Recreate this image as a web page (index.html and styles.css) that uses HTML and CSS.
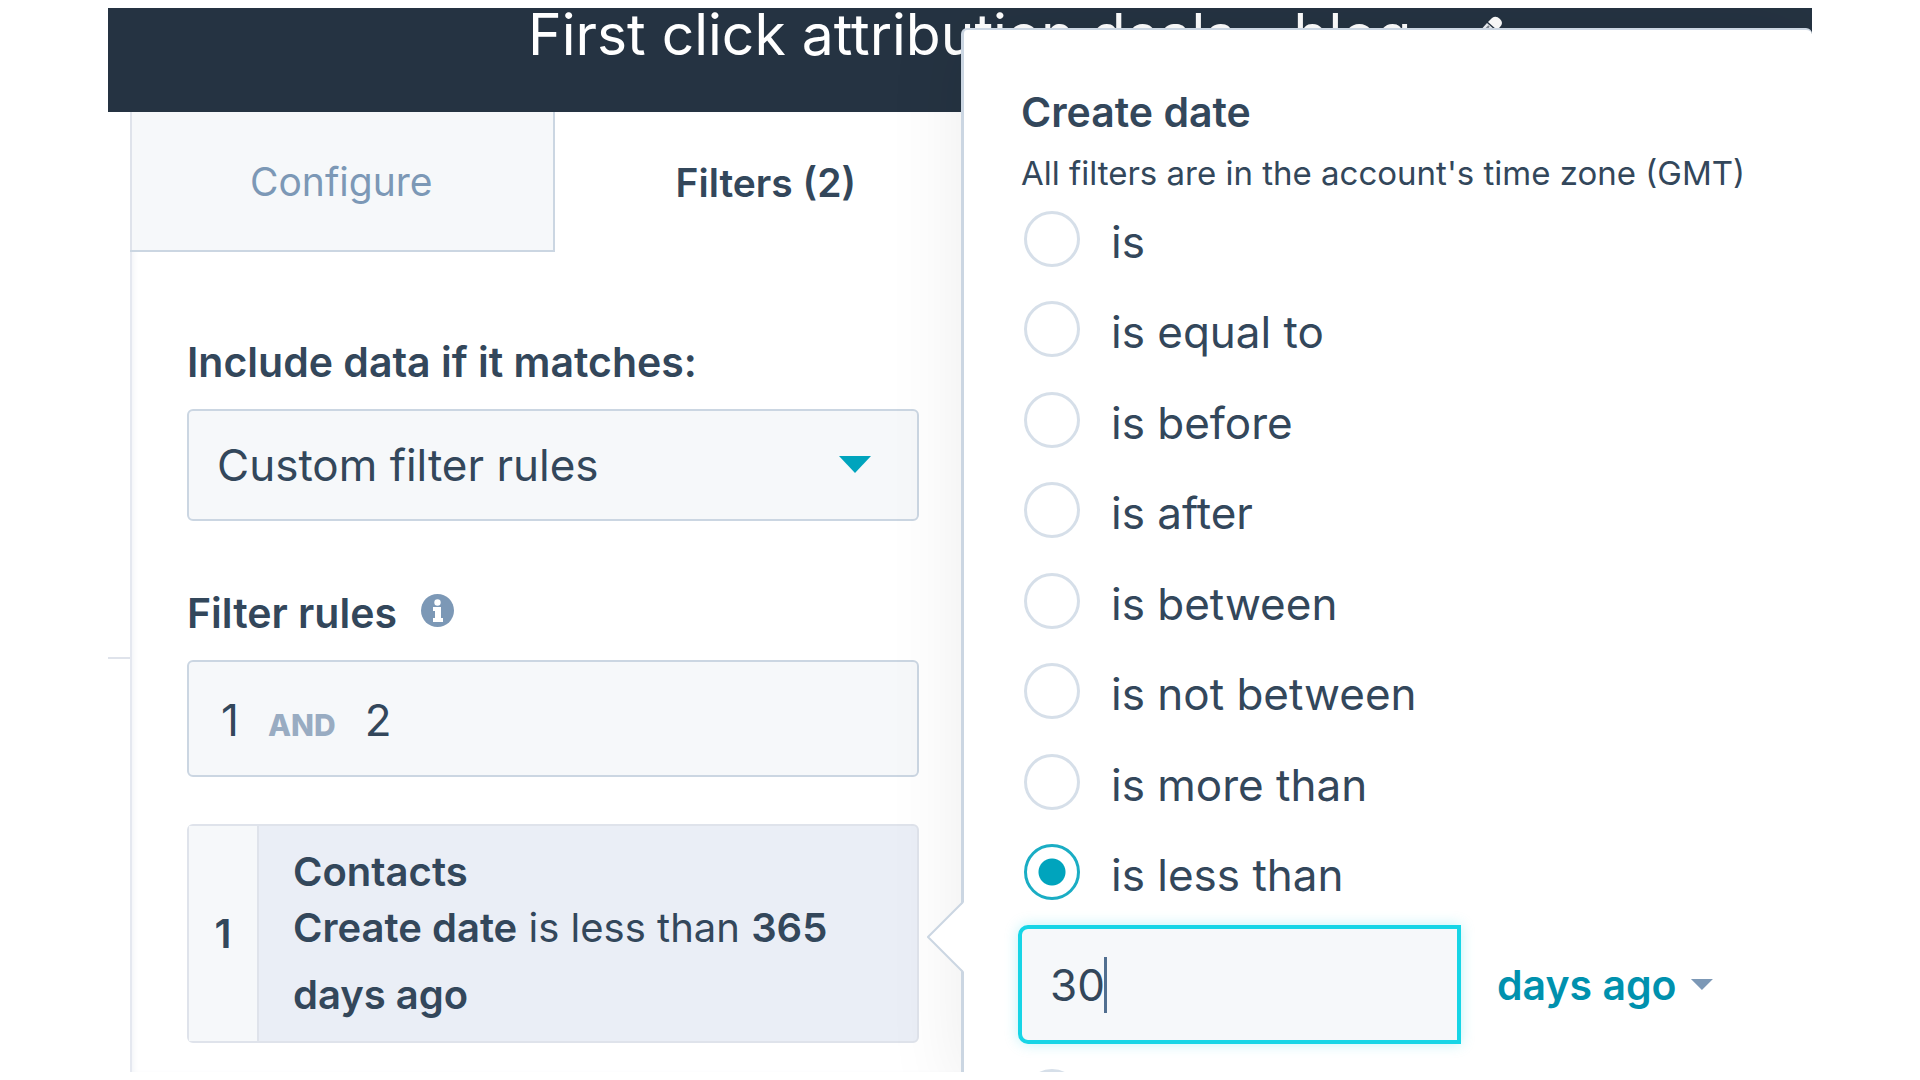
FILE: index.html
```html
<!DOCTYPE html>
<html lang="en">
  <head>
    <meta charset="UTF-8" />
    <meta name="viewport" content="width=device-width, initial-scale=1.0" />
    <title>First click attribution deals - blog</title>
    <link rel="stylesheet" href="styles.css">
  </head>
  <body>
    <div class="app">
      <header class="header">
        <h1>First click attribution deals - blog</h1>
        <button class="edit-btn" aria-label="Edit report name">
          <svg width="36" height="38" viewBox="0 0 36 38">
            <path d="M4 26 L20 8 L28 15 L12 33 L2 36 Z" fill="#eef1f5" />
            <path d="M8 26 L22 11 M12 29 L25 15" stroke="#7d8792" stroke-width="2" />
            <path d="M21 7 L25 3 Q29 0 33 4 Q37 8 33 12 L30 15 Z" fill="#ffffff" />
          </svg>
        </button>
      </header>

      <div class="workspace">
        <aside class="panel">
          <nav class="tabs">
            <button class="tab">Configure</button>
            <button class="tab active">Filters (2)</button>
          </nav>

          <div class="panel-body">
            <label class="field-label" for="matchType">Include data if it matches:</label>
            <div class="select-box">
              <select id="matchType">
                <option>Custom filter rules</option>
              </select>
            </div>

            <div class="rules-title">
              <h2 class="field-label">Filter rules</h2>
              <svg class="info-icon" width="33" height="33" viewBox="0 0 33 33">
                <circle cx="16.5" cy="16.5" r="16.5" fill="#7c98b6" />
                <circle cx="16.5" cy="8.5" r="3.2" fill="#ffffff" />
                <path d="M12 13 H20 V24 H22 V28 H12 V24 H14 V17 H12 Z" fill="#ffffff" />
              </svg>
            </div>
            <div class="rule-logic">
              <span>1</span>
              <span class="operator">AND</span>
              <span>2</span>
            </div>

            <div class="rule-card">
              <div class="rule-number">1</div>
              <div class="rule-text">
                <h3>Contacts</h3>
                <p><b>Create date</b> is less than <b>365 days ago</b></p>
              </div>
            </div>
          </div>
        </aside>
      </div>

      <section class="popover">
        <svg class="popover-arrow" width="37" height="72" viewBox="0 0 37 72">
          <path d="M37 1 L1 36 L37 71 Z" fill="#ffffff" />
          <path d="M36 1 L1 36 L36 71" fill="none" stroke="#cbd6e2" stroke-width="2" />
        </svg>
        <h2 class="popover-title">Create date</h2>
        <p class="popover-note">All filters are in the account's time zone (GMT)</p>

        <div class="options">
          <label class="option"><input type="radio" name="op" /><span>is</span></label>
          <label class="option"><input type="radio" name="op" /><span>is equal to</span></label>
          <label class="option"><input type="radio" name="op" /><span>is before</span></label>
          <label class="option"><input type="radio" name="op" /><span>is after</span></label>
          <label class="option"><input type="radio" name="op" /><span>is between</span></label>
          <label class="option"><input type="radio" name="op" /><span>is not between</span></label>
          <label class="option"><input type="radio" name="op" /><span>is more than</span></label>
          <label class="option"><input type="radio" name="op" checked /><span>is less than</span></label>
        </div>

        <div class="value-row">
          <div class="value-box">
            <input type="text" value="30" aria-label="Number of days" />
            <i class="caret"></i>
          </div>
          <div class="unit-box">
            <select aria-label="Unit">
              <option>days ago</option>
            </select>
          </div>
        </div>

        <label class="option"><input type="radio" name="op" aria-label="Next option" /></label>
      </section>
    </div>
  </body>
</html>
```
FILE: styles.css
```css
/* Reset and Base Styles */
* {
  margin: 0;
  padding: 0;
  box-sizing: border-box;
}

body {
  font-family: Inter, "Open Sans", sans-serif;
  font-size: 44px;
  color: #33475b;
  background: #fff;
  height: 100vh;
  padding: 8px 108px;
}

button,
input,
select {
  font: inherit;
  color: inherit;
  border: none;
  background: none;
}

.app {
  position: relative;
  height: 100%;
  display: flex;
  flex-direction: column;
  overflow: hidden;
}

/* Header */
.header {
  flex: none;
  height: 104px;
  padding-left: 420px;
  display: flex;
  align-items: flex-start;
  gap: 56px;
  background: #253342;
  color: #fff;
}

.header h1 {
  font-size: 57px;
  font-weight: 400;
  line-height: 54px;
  white-space: nowrap;
}

.edit-btn {
  padding-top: 2px;
}

/* Workspace behind the panel, with its divider line */
.workspace {
  flex: 1;
  min-height: 0;
  padding-left: 22px;
  background: linear-gradient(#dfe3eb, #dfe3eb) 0 545px / 100% 2px no-repeat;
}

.panel {
  width: calc(50% + 6px);
  height: 100%;
  background: #fff;
  box-shadow: inset 2px 0 #e5e8f0, inset 6px 0 6px -3px #eff1f6;
}

/* Tabs */
.tabs {
  display: flex;
}

.tab {
  flex: 1;
  height: 140px;
  font-size: 39px;
  font-weight: 600;
}

.tab:not(.active) {
  font-weight: 400;
  color: #7c98b6;
  background: #f6f8fa;
  border-right: 2px solid #cbd6e2;
  border-bottom: 2px solid #cbd6e2;
  box-shadow: inset 2px 0 #dfe3eb;
}

.panel-body {
  padding: 84px 58px 0 57px;
}

.field-label {
  display: block;
  font-size: 41px;
  font-weight: 600;
  line-height: 52px;
}

.select-box {
  position: relative;
  margin-top: 21px;
}

.select-box select {
  appearance: none;
  width: 100%;
  height: 112px;
  padding: 0 80px 0 28px;
  background: #f6f8fa;
  border: 2px solid #cbd6e2;
  border-radius: 6px;
}

.select-box::after {
  content: "";
  position: absolute;
  right: 48px;
  top: 47px;
  width: 32px;
  height: 17px;
  background: #00a4bd;
  clip-path: polygon(0 0, 100% 0, 50% 100%);
}

.rules-title {
  display: flex;
  align-items: center;
  gap: 24px;
  margin-top: 66px;
}

.info-icon {
  margin-bottom: 6px;
}

.rule-logic {
  display: flex;
  align-items: baseline;
  gap: 29px;
  height: 117px;
  margin-top: 21px;
  padding: 0 32px;
  line-height: 117px;
  background: #f6f8fa;
  border: 2px solid #cbd6e2;
  border-radius: 6px;
}

.operator {
  font-size: 30px;
  font-weight: 800;
  color: #99acc2;
}

.rule-card {
  display: flex;
  margin-top: 47px;
  font-size: 40px;
  background: #eaeef6;
  border: 2px solid #dfe3eb;
  border-radius: 6px;
}

.rule-number {
  width: 70px;
  display: flex;
  align-items: center;
  justify-content: center;
  font-weight: 600;
  background: #f6f8fa;
  border-right: 2px solid #dfe3eb;
}

.rule-text {
  flex: 1;
  padding: 23px 34px 13px;
}

.rule-text h3 {
  font-size: 40px;
  font-weight: 600;
  line-height: 45px;
}

.rule-text p {
  line-height: 67px;
}

.rule-text b {
  font-weight: 600;
}

/* Popover */
.popover {
  position: absolute;
  left: calc(50% + 1px);
  right: 0;
  top: 20px;
  height: 100%;
  padding: 56px 0 0 57px;
  background: #fff;
  border-left: 3px solid #cbd6e2;
  border-top: 2px solid #cbd6e2;
  border-radius: 6px 6px 0 0;
  box-shadow: 0 0 80px rgba(0, 0, 0, 0.08);
}

.popover-arrow {
  position: absolute;
  left: -37px;
  top: 871px;
}

.popover-title {
  font-size: 41px;
  font-weight: 600;
  line-height: 52px;
}

.popover-note {
  font-size: 33px;
  line-height: 70px;
}

.options {
  display: flex;
  flex-direction: column;
  justify-content: space-between;
  height: 689px;
  margin-top: 3px;
}

.option {
  display: flex;
  height: 56px;
  padding-left: 3px;
  gap: 31px;
}

.option input {
  appearance: none;
  width: 56px;
  height: 56px;
  border: 3px solid #d6dfe9;
  border-radius: 50%;
}

.option input:checked {
  border-color: #1aadc4;
  background: radial-gradient(circle, #00a4bd 13px, #fff 14px);
}

.option span {
  line-height: 62px;
}

.value-row {
  display: flex;
  align-items: center;
  gap: 36px;
  margin: 25px 0;
}

.value-box {
  position: relative;
  width: 56%;
  margin-left: -3px;
}

.value-box input {
  display: block;
  width: 100%;
  height: 119px;
  padding: 0 28px;
  background: #f6f8fa;
  border: 4px solid #17d5e6;
  border-radius: 10px 0 0 10px;
  box-shadow: 0 0 14px rgba(0, 208, 228, 0.25);
}

.caret {
  position: absolute;
  left: 86px;
  top: 32px;
  width: 3px;
  height: 56px;
  background: #516f90;
}

.unit-box {
  display: flex;
  align-items: center;
  gap: 14px;
}

.unit-box select {
  appearance: none;
  font-size: 41px;
  font-weight: 600;
  color: #0091ae;
}

.unit-box::after {
  content: "";
  width: 22px;
  height: 11px;
  background: #7c98b6;
  clip-path: polygon(0 0, 100% 0, 50% 100%);
}
```
